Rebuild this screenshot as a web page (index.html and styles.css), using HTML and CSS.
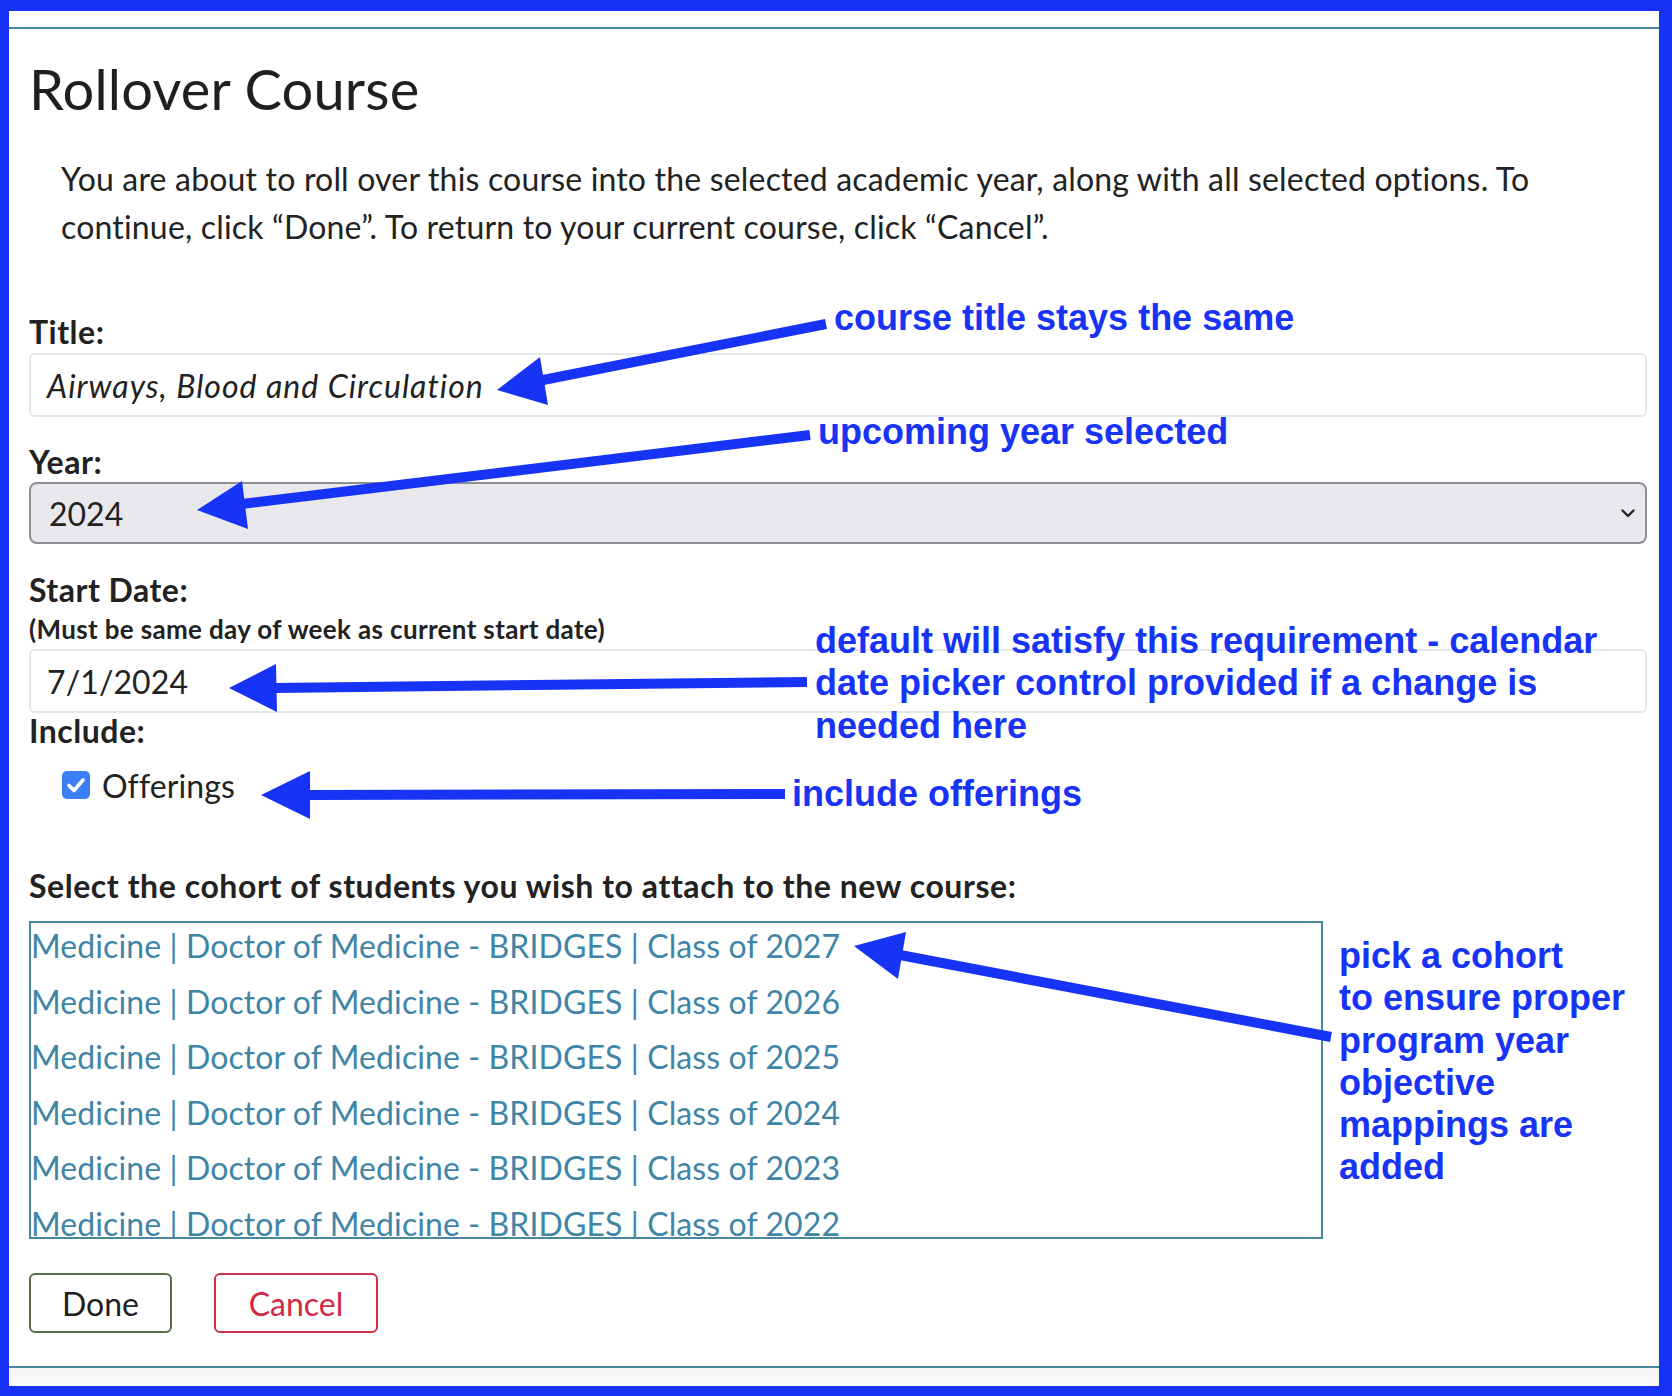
FILE: index.html
```html
<!DOCTYPE html>
<html lang="en">
<head>
<meta charset="utf-8">
<title>Rollover Course</title>
<link rel="stylesheet" href="styles.css">
</head>
<body>
<div class="frame">
  <div class="modal">
    <h2 class="heading">Rollover Course</h2>
    <p class="intro">You are about to roll over this course into the selected academic year, along with all selected options. To continue, click “Done”. To return to your current course, click “Cancel”.</p>

    <div class="field field-title">
      <label class="label">Title:</label>
      <div class="input input-title">Airways, Blood and Circulation</div>
    </div>

    <div class="field field-year">
      <label class="label">Year:</label>
      <div class="select">
        <span>2024</span>
        <svg class="chevron" viewBox="0 0 14 9" width="14" height="9"><path d="M1.5 1.5 L7 7 L12.5 1.5" fill="none" stroke="#222" stroke-width="2.4" stroke-linecap="round" stroke-linejoin="round"/></svg>
      </div>
    </div>

    <div class="field field-date">
      <label class="label">Start Date:</label>
      <div class="note">(Must be same day of week as current start date)</div>
      <div class="input">7/1/2024</div>
    </div>

    <div class="field field-include">
      <label class="label">Include:</label>
      <div class="check-row">
        <span class="checkbox"><svg viewBox="0 0 28 28" width="28" height="28"><path d="M7 14.5 L12 19.5 L21 9" fill="none" stroke="#fff" stroke-width="3.6" stroke-linecap="round" stroke-linejoin="round"/></svg></span>
        <span class="check-label">Offerings</span>
      </div>
    </div>

    <div class="field cohort-field">
      <label class="label label-cohort">Select the cohort of students you wish to attach to the new course:</label>
      <ul class="cohort-list">
        <li>Medicine | Doctor of Medicine - BRIDGES | Class of 2027</li>
        <li>Medicine | Doctor of Medicine - BRIDGES | Class of 2026</li>
        <li>Medicine | Doctor of Medicine - BRIDGES | Class of 2025</li>
        <li>Medicine | Doctor of Medicine - BRIDGES | Class of 2024</li>
        <li>Medicine | Doctor of Medicine - BRIDGES | Class of 2023</li>
        <li class="hovered">Medicine | Doctor of Medicine - BRIDGES | Class of 2022</li>
      </ul>
    </div>

    <div class="buttons">
      <button class="btn btn-done">Done</button>
      <button class="btn btn-cancel">Cancel</button>
    </div>
  </div>
  <div class="strip"></div>
</div>

<div class="annotations">
  <svg class="arrows" viewBox="0 0 1672 1396" width="1672" height="1396">
    <g fill="#1733f5" stroke="#1733f5">
      <line x1="826" y1="324" x2="538" y2="381" stroke-width="10"/>
      <polygon points="497,390 540,357 548,405" stroke="none"/>
      <line x1="810" y1="435" x2="242" y2="504" stroke-width="10"/>
      <polygon points="197,510 242,481 248,529" stroke="none"/>
      <line x1="807" y1="682" x2="274" y2="688" stroke-width="10"/>
      <polygon points="229,688 276,664 277,712" stroke="none"/>
      <line x1="785" y1="794" x2="308" y2="795" stroke-width="10"/>
      <polygon points="261,795 310,771 310,819" stroke="none"/>
      <line x1="1331" y1="1037" x2="900" y2="955" stroke-width="10"/>
      <polygon points="854,946 906,932 898,979" stroke="none"/>
    </g>
  </svg>
  <div class="note-text n1">course title stays the same</div>
  <div class="note-text n2">upcoming year selected</div>
  <div class="note-text n3">default will satisfy this requirement - calendar<br>date picker control provided if a change is<br>needed here</div>
  <div class="note-text n4">include offerings</div>
  <div class="note-text n5">pick a cohort<br>to ensure proper<br>program year<br>objective<br>mappings are<br>added</div>
</div>
</body>
</html>
```
FILE: styles.css
```css
* { box-sizing: border-box; }

html, body {
  margin: 0;
  padding: 0;
  background: #ffffff;
}

body {
  font-family: "Lato", "Roboto", sans-serif;
  font-size: 32px;
  color: #222222;
  width: 1672px;
  height: 1396px;
  position: relative;
  overflow: hidden;
}

.frame {
  width: 1672px;
  height: 1396px;
  border-style: solid;
  border-color: #1632f6;
  border-width: 11px 13px 10px 9px;
  padding-top: 16px;
  display: flex;
  flex-direction: column;
  background: #ffffff;
}

.modal {
  flex: 1;
  border-top: 2px solid #4a86a0;
  border-bottom: 2px solid #4a86a0;
  padding: 0 12px 0 20px;
  display: flex;
  flex-direction: column;
}

.strip {
  height: 18px;
  background: linear-gradient(180deg, #f5f5f5, #fbfbfb);
}

.heading {
  margin: 26px 0 0 0;
  font-size: 56px;
  font-weight: 400;
  line-height: 67px;
  letter-spacing: 0.2px;
  color: #1f1f1f;
}

.intro {
  margin: 33px 0 0 0;
  padding: 0 90px 0 32px;
  line-height: 48px;
  letter-spacing: 0.18px;
}

.field {
  display: flex;
  flex-direction: column;
}

.field-title { margin-top: 61px; }
.field-year { margin-top: 25px; }
.field-date { margin-top: 26px; }
.field-include { margin-top: 0; }
.field-include .label { margin-top: -2px; }

.label {
  font-weight: 700;
  line-height: 40px;
  letter-spacing: 0.5px;
  color: #222;
}

.label-cohort { letter-spacing: 0.56px; }

.input {
  height: 64px;
  margin-top: 1px;
  border: 2px solid #e4e8e8;
  border-radius: 6px;
  padding: 0 16px;
  display: flex;
  align-items: center;
  background: #fff;
  letter-spacing: 0.1px;
}

.input-title {
  font-style: italic;
  letter-spacing: 1px;
}

.select {
  height: 62px;
  border: 2px solid #8e8e97;
  border-radius: 8px;
  background: #e9e9ed;
  padding: 0 10px 0 18px;
  display: flex;
  align-items: center;
  justify-content: space-between;
}

.note {
  font-size: 26px;
  font-weight: 700;
  line-height: 38px;
  letter-spacing: 0.35px;
}

.check-row {
  display: flex;
  align-items: center;
  gap: 12px;
  margin: 10px 0 0 33px;
  height: 48px;
}

.checkbox {
  width: 28px;
  height: 28px;
  border-radius: 5px;
  background: #3b7ff6;
  display: flex;
}

.check-label { letter-spacing: 0.1px; }

.cohort-field { margin-top: 57px; }

.cohort-list {
  list-style: none;
  margin: 15px 0 0 0;
  padding: 0;
  width: 1294px;
  height: 318px;
  border: 2px solid #4a86a0;
  overflow: hidden;
}

.cohort-list li {
  height: 55.6px;
  line-height: 45px;
  color: #3f85a7;
  letter-spacing: 0.1px;
  white-space: nowrap;
}

.cohort-list li.hovered {
  text-decoration: underline;
  text-underline-offset: 2px;
}

.buttons {
  display: flex;
  gap: 42px;
  margin-top: 34px;
}

.btn {
  font-family: inherit;
  font-size: 32px;
  height: 60px;
  border-radius: 6px;
  background: #fff;
  padding: 0;
  cursor: pointer;
}

.btn-done {
  width: 143px;
  border: 2px solid #5a6f48;
  color: #1f1f1f;
}

.btn-cancel {
  width: 164px;
  border: 2px solid #d0304a;
  color: #cf2b45;
}

.annotations {
  position: absolute;
  left: 0;
  top: 0;
  width: 1672px;
  height: 1396px;
  pointer-events: none;
}

.arrows {
  position: absolute;
  left: 0;
  top: 0;
}

.note-text {
  position: absolute;
  font-family: "Liberation Sans", Arial, sans-serif;
  font-weight: 700;
  font-size: 36px;
  line-height: 42.3px;
  color: #1733f5;
  white-space: nowrap;
}

.n1 { left: 834px; top: 297px; }
.n2 { left: 818px; top: 411px; }
.n3 { left: 815px; top: 620px; }
.n4 { left: 792px; top: 773px; }
.n5 { left: 1339px; top: 935px; }
```
